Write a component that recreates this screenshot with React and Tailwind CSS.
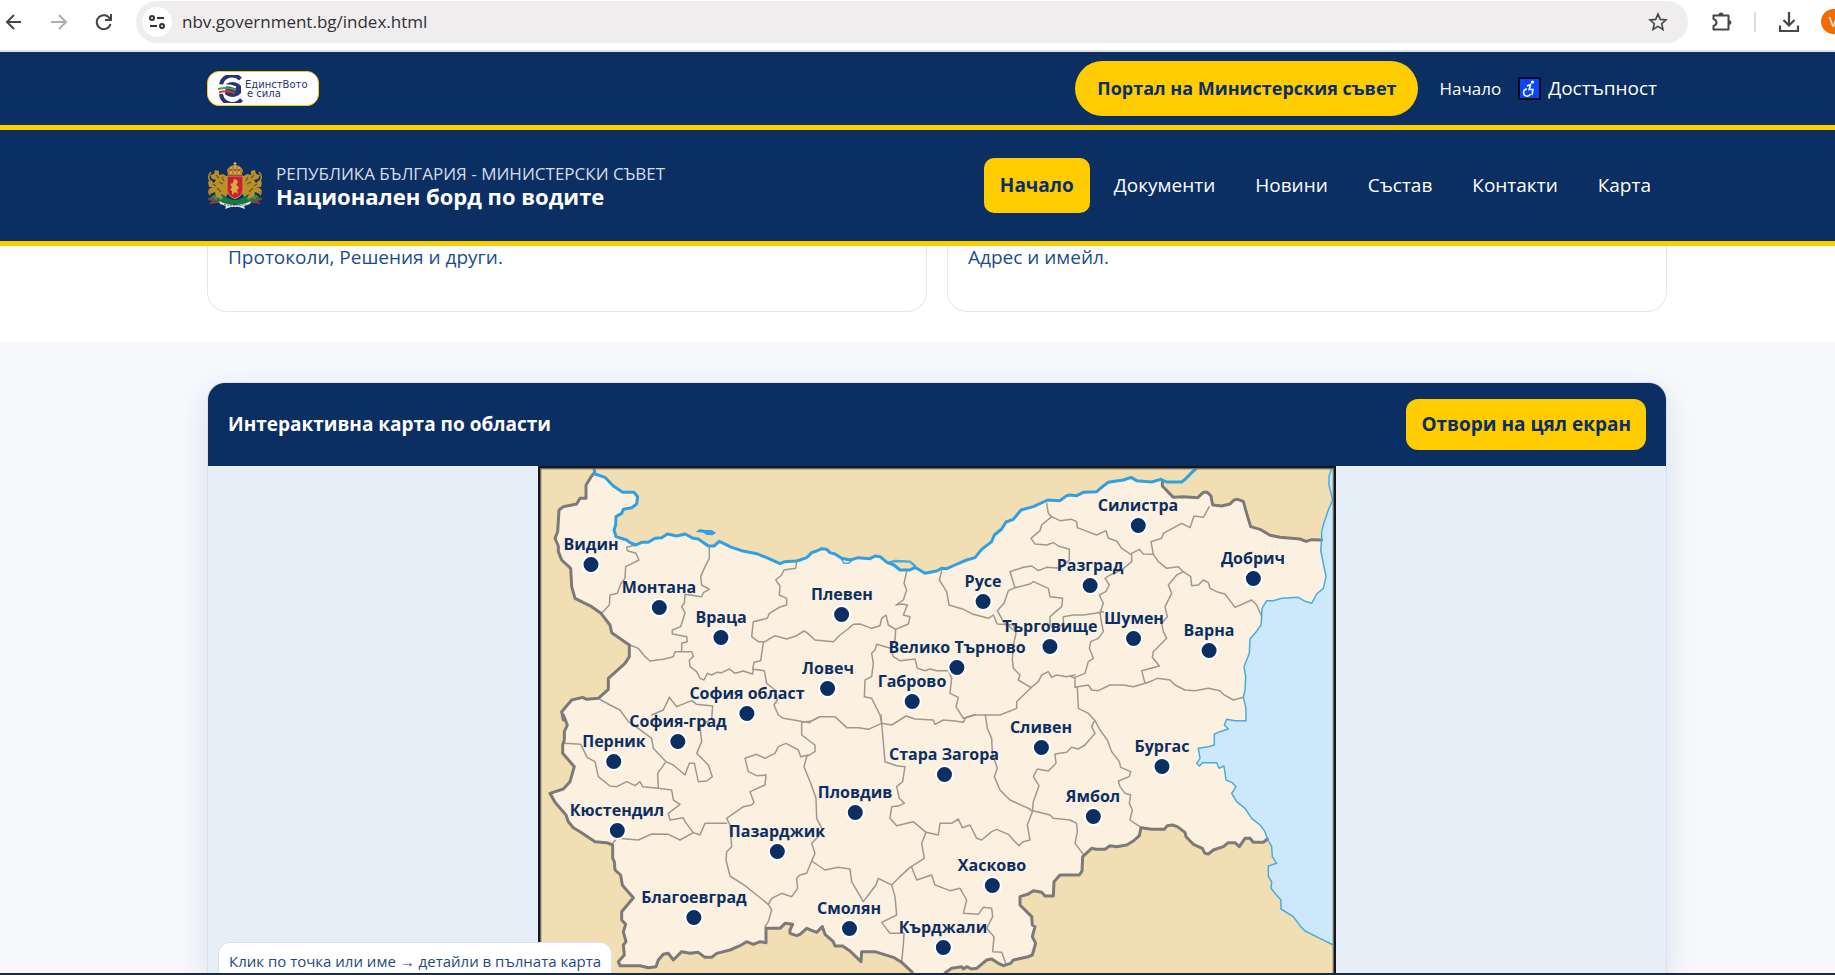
import React from "react";

const at = (dx, dy, list) =>
  list
    .split(" ")
    .map((p) => {
      const [x, y] = p.split(",").map(Number);
      return `${x + dx},${y + dy}`;
    })
    .join(" ");

const danube = [
  "192,25 195,42 225,52 250,78 278,97 312,97 323,110 320,132 305,143 280,148 275,160 258,170 257,195 252,210 258,230 290,240 300,248 318,255 335,247 355,247 375,235 395,233 412,222 440,228 465,222 490,235 505,237 535,258 552,258 568,244 605,262 635,272 680,281 710,293 750,311 765,305 798,303",
  at(810, 0, "0,300 20,293 35,278 50,273 65,266 80,268 90,278 105,282 125,295 150,300 175,293 210,296 225,288 240,290 262,308 282,315 300,330 330,330 345,322 375,340 410,333 425,325 440,326 465,315 500,300 525,293 545,268 575,245 583,225 605,207 618,186 640,178 663,150 700,140 743,120 780,122 800,107"),
  at(1620, 0, "0,105 20,107 40,97 80,95 100,78 115,67 160,60 183,52 200,62 245,66 272,58"),
].join(" ");

const danubeEast = at(1620, 0, "272,58 290,66 335,66 345,58 378,25");

const northEast = at(1620, 0, "277,66 277,78 310,112 340,110 383,113 400,97 412,97 423,108 428,135 455,138 480,132 492,120 503,118 520,124 530,160 542,200 570,208 600,226 630,232 690,237 708,244 725,239 755,240");

const coastNorth = at(1620, 0, "785,25 777,50 777,75 788,120 775,150 763,185 755,215 755,240");

const coast = [
  at(1620, 0, "755,240 752,270 760,310 768,350 760,385 740,402 725,430 705,424 685,412 635,415 610,422 590,422 576,445 575,470 573,495 555,520 540,537 538,580 522,620 527,650 525,690 520,712 527,740 528,765"),
  at(1620, 765, "528,17 495,17 470,13 463,30 475,42 450,50 433,57 433,90 415,95 385,100 390,130 380,145 388,153 398,143 440,143 447,160 462,153 468,195 487,203 498,215 485,235 500,260 525,280 545,310 570,330 585,350 592,372"),
].join(" ");

const coastSouth = at(1620, 765, "592,372 605,395 607,425 620,445 595,453 595,485 605,500 603,520 615,535 633,555 633,582 670,605 690,632 705,648 745,668 790,690");

const south = [
  at(1620, 765, "592,372 580,382 550,382 540,370 525,370 508,395 495,383 475,383 460,395 430,405 415,417 405,415 397,400 370,388 348,365 345,352 322,335 307,330 292,332 283,343 245,343 213,338 208,362 190,378 170,390 140,395 120,392 105,403 78,403 65,400 38,425 36,468 28,480 0,480"),
  at(810, 765, "780,480 762,500 760,543 735,543 725,532 700,527 685,537 660,545 660,570 695,605 697,630 705,635 697,665 707,685 697,720 685,725 640,735 632,745 610,752 595,745 575,732 560,735 530,760 515,762 500,755 490,762 485,755 455,760 440,770 420,790 345,790 335,770 305,742 280,727 225,710 185,710 183,740 150,708 128,693 105,693 100,680 75,658 67,635 50,652 20,640 0,658"),
  at(0, 765, "800,662 780,655 780,645 788,628 765,625 750,640 708,640 708,683 690,680 670,688 650,680 630,692 600,705 560,715 545,727 525,727 505,712 480,715 455,710 430,735 415,715 400,718 385,735 378,755 355,758 330,752 270,752 265,740 283,720 280,690 288,680 280,650 287,628 275,615 275,590 310,548 285,520 277,510 272,480 255,465 253,440 248,430 248,390 230,383 195,380 150,350 130,338 115,320 108,300 75,262 60,235 100,222 120,200 133,155 98,115 98,90 103,75 103,50 112,30 100,0"),
  "100,780 95,755 125,720 158,712 170,718 205,715 235,688 235,655 285,610 298,590 298,555 245,518 240,495 213,460 185,440 135,415 125,380 122,325 95,300 85,275 85,258 75,235 83,215 87,150 100,140 140,132 150,115 168,115 168,75 185,48 192,40",
].join(" ");

const regions = [
  "318,255 290,262 292,272 318,280 327,300 287,320 285,355 272,372 262,400 240,405 238,435 215,460",
  "538,262 538,295 525,320 512,350 515,375 538,388 520,398 515,410 465,403 463,430 455,440 465,458 452,500 427,510 427,522 470,530 472,545 455,550 455,573",
  "300,555 325,565 345,590 360,603 400,598 430,590 435,575 485,575 490,590 478,600 480,620 500,635 510,655 522,660 532,640 545,645 560,637 575,638 598,627 615,640 640,633 668,642 670,628 703,632 710,670 735,690 742,720 732,735 745,765 760,775 840,788",
  "668,628 672,607 692,602 700,548",
  "800,305 797,325 762,330 755,345 737,360 750,378 748,405 770,415 770,435 748,442 718,460 712,475 670,485 665,530 685,545 705,545 735,527 770,537 800,527 822,513 830,517 855,540 910,545 930,525 950,510 970,493 990,492 1025,505 1050,497 1055,475 1068,465 1075,495 1097,508 1135,492 1140,470 1120,465 1132,435 1115,432 1098,435 1120,420 1130,390 1122,370 1130,335",
  at(810, 0, "287,508 285,540 272,565 230,553 225,570 215,580 220,610 215,650 195,660 193,710 215,715 240,765 245,790"),
  at(810, 0, "272,565 280,590 300,602 345,597 352,625 375,632 390,627 410,632 445,632 455,655 450,700 475,712 468,740 490,775 520,765 555,765 600,765 650,745 650,725 693,683"),
  at(810, 0, "425,333 418,360 440,395 447,435 490,448 520,463 565,475 580,465 592,492 640,495 648,520 640,555 637,600 640,625 660,645 655,660 693,683 715,665 725,645 745,635 755,652 770,645 800,650 825,645"),
  at(810, 0, "640,510 610,485 592,452 612,430 625,392 645,383 690,372 700,365 745,385 750,410 788,415 785,440 750,470 750,490 765,515 790,490 790,470 820,465 850,465 885,460 910,455"),
  at(810, 0, "645,383 630,335 670,322 695,318 715,332 740,322 780,325 808,300 808,268 775,258 760,248 740,255 705,252 693,235 720,212 725,195 755,170 745,160 740,130"),
  at(1620, 0, "-55,170 -30,182 5,178 20,185 22,203 45,212 80,225 108,212 115,235 140,243 155,265 185,285 185,305 155,330 120,345 105,355 118,375 107,395 88,405 100,430 90,458"),
  at(1620, 0, "185,280 208,268 220,282 250,283 243,245 275,235 280,220 335,190 360,203 372,168 400,172 418,140"),
  at(1620, 0, "250,283 265,305 290,325 325,320 340,335 362,350 365,377 385,375 400,360 415,368 420,385 445,397 465,402 495,442 545,420 560,435 573,465"),
  at(1620, 0, "340,335 320,345 295,375 305,400 285,440 292,470 275,490 280,515 290,535 250,575 247,592 268,618 215,632 225,670 190,680 160,675 120,675 85,692 65,690 55,675 15,682 15,655 0,648"),
  at(1620, 0, "225,670 240,665 262,655 300,660 315,675 345,690 375,692 415,685 450,692 460,703 490,720 520,712"),
  at(1620, 0, "90,458 95,490 100,515 85,535 62,545 58,565 70,595 55,605 45,640 15,652"),
  at(1620, 0, "22,680 25,745 55,760 75,782 90,810 112,840 125,875 148,905 152,922 182,935 178,950 145,963 150,980 165,1000 182,1005 178,1030 187,1050 180,1080 213,1102"),
  at(1620, 765, "72,20 65,35 75,55 45,90 25,102 5,97 -10,112 -45,117 -42,145 -65,168 -98,162 -110,185 -93,212 -110,260 -113,290"),
  at(810, 765, "697,290 682,330 690,375 670,380 657,392 640,375 625,358 590,343 575,350 545,375 530,370 510,330 487,338 475,312 455,325 420,325 415,360 378,352"),
  at(810, 765, "690,285 750,300 760,310 810,315 830,325 832,350 825,385 850,418"),
  at(810, 765, "556,0 562,40 575,70 577,115 592,160 583,185 600,225 630,255 690,282"),
  at(810, 765, "243,0 248,60 255,140 290,152 315,155 308,200 290,215 298,250 313,265 298,272 275,275 270,310 290,332 340,320 378,352 365,385 373,430 330,457 300,485 275,510"),
  at(810, 765, "30,20 60,5 105,5 140,38 175,38 205,43 245,25 275,30 318,3 345,12 400,15 405,28 430,15 465,18 490,22 497,8 525,0"),
  at(810, 765, "60,5 35,18 5,22 5,60 45,90 45,110 20,125 12,155 32,205 48,250 50,310 68,345 50,370 35,385 45,415 35,438 75,465 115,457 150,462 155,500 190,560 205,540 228,510 235,490 275,510 285,545 290,600 245,622 270,655 312,655 310,690 305,742"),
  at(810, 765, "35,438 20,475 0,480 -10,490 -7,520 -25,545 -55,535 -85,550 -95,568 -85,585 -95,620 -105,635"),
  at(0, 765, "715,568 645,512 600,483 588,435 590,410 605,395 600,330 590,310 640,275 665,270 672,262 660,230 705,210 708,180 680,182 655,170 645,130 680,118 705,130 735,115 745,95 768,85 805,105 812,125 835,120"),
  at(0, 765, "590,325 525,325 510,360 490,353 465,320 460,308 420,315 415,295 450,268 430,255 425,225 385,220 338,215 330,200 315,212 290,200 260,215 240,213 205,185 195,140 172,128 152,88 105,85"),
  at(0, 765, "490,353 450,375 415,358 365,357 325,375 262,370 245,388"),
  at(0, 765, "385,220 383,175 408,140 370,100 365,70 325,40 295,20 270,-15 240,-30 210,-47"),
  at(0, 765, "408,140 430,150 465,180 478,145 493,145 505,200 530,198 547,185 535,150 500,115 515,80 510,35 545,10 548,-27 500,-32 485,-43 440,-25 418,-53 400,-15 365,0"),
  at(810, 765, "335,457 350,495 395,480 405,510 450,527 480,520 500,555 490,595 535,598 550,577 575,580 578,605 560,640 582,665 578,710 605,712 617,745"),
];

const cities = [
  ["Видин", 591, 564], ["Монтана", 659, 607], ["Враца", 721, 637],
  ["София област", 747, 713], ["Плевен", 842, 614], ["Русе", 983, 601],
  ["Велико Търново", 957, 667], ["Ловеч", 828, 688], ["Габрово", 912, 701],
  ["Търговище", 1050, 646], ["Силистра", 1138, 525], ["Разград", 1090, 585],
  ["Добрич", 1253, 578], ["Шумен", 1134, 638], ["Варна", 1209, 650],
  ["София-град", 678, 741], ["Перник", 614, 761], ["Кюстендил", 617, 830],
  ["Пазарджик", 777, 851], ["Благоевград", 694, 917], ["Стара Загора", 944, 774],
  ["Пловдив", 855, 812], ["Сливен", 1041, 747], ["Хасково", 992, 885],
  ["Смолян", 849, 928], ["Кърджали", 943, 947], ["Бургас", 1162, 766],
  ["Ямбол", 1093, 816],
];

function BulgariaMap() {
  return (
    <div className="relative h-[550px] w-[798px] shrink-0">
      <svg className="block" width="798" height="550" viewBox="24 18 2394 1650" aria-hidden="true">
        <rect x="24" y="18" width="2394" height="1650" fill="#f2deb3" />
        <polygon points={`${coastNorth} ${coast} ${coastSouth} 2418,1462 2418,18`} fill="#cde8fa" />
        <polygon points={`${danube} ${northEast} ${coast} ${south}`} fill="#fcf1e0" />
        <g fill="none" strokeLinejoin="round" strokeLinecap="round">
          <g stroke="#a0988f" strokeWidth="4.5">
            {regions.map((r) => <polyline key={r} points={r} />)}
          </g>
          <polyline points={south} stroke="#7c7a78" strokeWidth="9" />
          <polyline points={northEast} stroke="#7c7a78" strokeWidth="9" />
          <g stroke="#4aaae0" strokeWidth="4.5">
            <polyline points={coastNorth} />
            <polyline points={coast} />
            <polyline points={coastSouth} />
            <polyline points="1075,308 1095,303 1140,305 1155,318" strokeWidth="7" />
            <polyline points="935,298 942,310 955,310 970,298" />
          </g>
          <g stroke="#329fe0" strokeWidth="9">
            <polyline points={danube} />
            <polyline points={danubeEast} />
          </g>
        </g>
        <path d="M497 215L510 207L525 210L545 210L558 218L548 226L530 225L520 218Z" fill="#329fe0" />
        <rect x="28" y="22" width="2386" height="1660" fill="none" stroke="#6d6a60" strokeWidth="12" />
        <rect x="27" y="21" width="2388" height="1660" fill="none" stroke="#15171a" strokeWidth="6" />
      </svg>
      {cities.map(([name, x, y]) => (
        <button
          key={name}
          type="button"
          className="absolute flex -translate-x-1/2 -translate-y-full flex-col items-center gap-px whitespace-nowrap text-[16px] font-bold leading-5 text-[#0b2e63]"
          style={{ left: x - 538, top: y - 466 + 10 }}
        >
          <span>{name}</span>
          <span className="block size-[19px] rounded-full border-2 border-white bg-[#0b2e63]" />
        </button>
      ))}
    </div>
  );
}

function Lion() {
  return (
    <>
      <path d="M21 15L16 12L12 13L12 9L8 8L7 12L3 13L5 17L9 18L7 21L4 18L1 20L2 25L6 25L3 27L3 32L8 30L9 35L16 37L14 32L19 35L21 31Z" fill="#b98f2a" />
      <path d="M3 19Q0 14 4 10M5 26Q0 28 3 33" fill="none" stroke="#b98f2a" strokeWidth="1.5" />
      <path d="M9 13l3 3M12 20l4 2M10 26l4 4M6 22l3 2M15 15l2 4" stroke="#6b551f" strokeWidth="1.1" />
    </>
  );
}

function Emblem() {
  return (
    <svg width="56" height="48" viewBox="0 0 56 48" aria-hidden="true">
      <path d="M1 38Q7 29 16 34L26 38H30L40 34Q49 29 55 38L46 40Q38 44 28 42Q18 44 10 40Z" fill="#137a45" />
      <path d="M1 37l8 0-5 4 8-1M55 37l-8 0 5 4-8-1" stroke="#a83a3a" strokeWidth="1.3" fill="none" />
      <path d="M6 34l4 3M12 33l2 5M50 34l-4 3M44 33l-2 5" stroke="#3fa56b" strokeWidth="1.2" />
      <g><Lion /></g>
      <g transform="translate(56 0) scale(-1 1)"><Lion /></g>
      <path d="M20 14H36V29Q35 34 28 37Q21 34 20 29Z" fill="#c81f35" stroke="#c9a03a" strokeWidth="1" />
      <path d="M27 17l3 1 1 3-2 1 3 4-2 2 1 4-3-2-3 3v-4l-2-1 2-3-2-3 3-1z" fill="#d9ab3b" />
      <path d="M21 13L20 8Q23 3 28 3Q33 3 36 8L35 13Z" fill="#b7862a" />
      <path d="M24 5v7M28 0v12M32 5v7M26.500 1.500h3" stroke="#e4c066" strokeWidth="1.200" />
      <path d="M23 8h2M31 8h2M27 8h2" stroke="#a3263a" strokeWidth="1.500" />
      <path d="M12 39Q28 47 44 39L43 42L37 44L38 47L32 45H24L18 47L19 44L13 42Z" fill="#e4e2dc" />
      <path d="M17 42Q28 46 39 42" fill="none" stroke="#777" strokeWidth="1" strokeDasharray="2 1" />
    </svg>
  );
}

function UnityLogo() {
  return (
    <a href="#unity" className="flex h-[35px] w-[112px] items-center gap-[2px] rounded-xl border border-[#ffcc00] bg-white pl-[10px] text-[#2b3275]">
      <svg width="25" height="28" viewBox="0 0 25 28" className="shrink-0" aria-hidden="true">
        <path d="M22.500 4A11.500 11.500 0 0 0 3 9.500M3 19A11.500 11.500 0 0 0 23.500 24.500" fill="none" stroke="#2b3275" strokeWidth="4" />
        <path d="M8 9Q11 7 15 7Q20 7.500 23 11V18Q20 21.500 15 22Q10 22 7 19Z" fill="#2b3275" />
        <path d="M0 11.500Q9 8.500 18 12.500" fill="none" stroke="#fff" strokeWidth="2" />
        <path d="M0 14Q9 11.500 18 15" fill="none" stroke="#4a9b4a" strokeWidth="2" />
        <path d="M1 17.500Q9 15 17 18" fill="none" stroke="#d23b3b" strokeWidth="2" />
      </svg>
      <span className="flex flex-col whitespace-nowrap font-['DejaVu_Sans',sans-serif] text-[10px] leading-[9px]">
        <span>ЕдинстВото</span>
        <span className="pl-[2px]">е сила</span>
      </span>
    </a>
  );
}

function BrowserBar() {
  return (
    <div className="flex h-[52px] shrink-0 items-start border-b-2 border-[#dfdfdf] bg-white">
      <div className="flex h-[43px] flex-1 items-center">
        <button type="button" aria-label="Назад" className="ml-[5px]">
          <svg width="18" height="18" viewBox="0 0 18 18" fill="none" stroke="#474747" strokeWidth="2"><path d="M16 9H2.500M9 2L2 9l7 7" /></svg>
        </button>
        <button type="button" aria-label="Напред" className="ml-[27px]">
          <svg width="18" height="18" viewBox="0 0 18 18" fill="none" stroke="#b0b0b0" strokeWidth="2"><path d="M1 9h14.500M9 2l7 7-7 7" /></svg>
        </button>
        <button type="button" aria-label="Презареждане" className="ml-[27px]">
          <svg width="18" height="18" viewBox="0 0 18 18" fill="none" stroke="#474747" strokeWidth="2"><path d="M15.500 11A7 7 0 1 1 15 6M16 1v6h-6" /></svg>
        </button>
        <div className="ml-[23px] flex h-[42px] flex-1 items-center rounded-full bg-[#efedee] pl-[6px] pr-[20px]">
          <button type="button" aria-label="Информация за сайта" className="flex size-[30px] items-center justify-center rounded-full bg-white">
            <svg width="16" height="14" viewBox="0 0 16 14" fill="none" stroke="#333" strokeWidth="2"><circle cx="3" cy="3" r="2" /><path d="M8 3h7M1 11h7" /><circle cx="13" cy="11" r="2" /></svg>
          </button>
          <input aria-label="Адрес" className="ml-[10px] min-w-0 flex-1 bg-transparent text-[17px] text-[#303134] outline-none" defaultValue="nbv.government.bg/index.html" />
          <button type="button" aria-label="Отметка">
            <svg width="20" height="20" viewBox="0 0 20 20" fill="none" stroke="#474747" strokeWidth="1.600"><path d="M10 2l2.300 5.400 5.700.5-4.300 3.800 1.300 5.800-5-3.100-5 3.100 1.300-5.800L2 7.900l5.700-.5z" /></svg>
          </button>
        </div>
        <button type="button" aria-label="Разширения" className="ml-[23px]">
          <svg width="22" height="22" viewBox="0 0 22 22"><path d="M2.500 4.500h15v14h-15V15q3-1 3-3.500t-3-3.500z" fill="none" stroke="#474747" strokeWidth="2" strokeLinejoin="round" /><path d="M7.500 4a2.500 2.500 0 0 1 5 0zM18 9a2.500 2.500 0 0 1 0 5z" fill="#474747" /></svg>
        </button>
        <span className="ml-[21px] h-[20px] w-[2px] bg-[#dedede]" />
        <button type="button" aria-label="Изтегляния" className="ml-[22px]">
          <svg width="22" height="22" viewBox="0 0 22 22" fill="none" stroke="#474747" strokeWidth="2.200"><path d="M11 1v13M5.500 9l5.500 5.500L16.500 9M2 14.500V20h18v-5.500" /></svg>
        </button>
        <span className="ml-[21px] flex h-[25px] w-[14px] shrink-0 items-center overflow-hidden rounded-l-full bg-[#f26b00] pl-[8px] text-[14px] text-white">V</span>
      </div>
    </div>
  );
}

const container = "mx-auto w-full max-w-[1460px]";
const nav = ["Документи", "Новини", "Състав", "Контакти", "Карта"];

export default function App() {
  return (
    <div className="flex h-screen flex-col overflow-hidden bg-white font-['Open_Sans','Noto_Sans',sans-serif] text-[#0b2e63]">
      <BrowserBar />
      <div className="-mr-[39px] flex min-h-0 flex-1 flex-col">
        <div className="h-[78px] shrink-0 border-b-[5px] border-[#ffcc00] bg-[#0b2e63]">
          <div className={`${container} flex h-full items-center justify-between`}>
            <UnityLogo />
            <div className="flex items-center pr-[10px] text-white">
              <a href="#portal" className="flex h-[55px] items-center rounded-full bg-[#ffcc00] px-[22px] text-[18px] font-bold text-[#0b2e63]">Портал на Министерския съвет</a>
              <a href="#home" className="ml-[21px] text-[17px]">Начало</a>
              <a href="#access" className="ml-[17px] flex items-center gap-[7px] text-[19px]">
                <svg width="23" height="23" viewBox="0 0 23 23" aria-hidden="true">
                  <rect x="1" y="1" width="21" height="21" fill="#0a46f5" stroke="#050b18" strokeWidth="2" />
                  <circle cx="14.500" cy="5" r="1.600" fill="#fff" />
                  <path d="M9 9l3.500-1.500L11 12.500h4L14 18M12.500 8l-1 4" fill="none" stroke="#fff" strokeWidth="1.500" />
                  <path d="M9 12a3.600 3.600 0 1 0 3.500 5" fill="none" stroke="#fff" strokeWidth="1.500" />
                </svg>
                Достъпност
              </a>
            </div>
          </div>
        </div>

        <header className="h-[116px] shrink-0 border-b-[5px] border-[#ffcc00] bg-[#0b2e63] text-white">
          <div className={`${container} flex h-full items-center justify-between`}>
            <a href="#top" className="flex items-center gap-[13px]">
              <Emblem />
              <span className="flex flex-col pb-[2px]">
                <span className="text-[17px] leading-[22px] text-[#d5dce8]">РЕПУБЛИКА БЪЛГАРИЯ - МИНИСТЕРСКИ СЪВЕТ</span>
                <span className="text-[22px] font-bold leading-[22px]">Национален борд по водите</span>
              </span>
            </a>
            <nav className="flex gap-2 text-[19px]">
              <a href="#home" className="flex h-[55px] items-center rounded-[10px] bg-[#ffcc00] px-4 font-bold text-[#0b2e63]">Начало</a>
              {nav.map((n) => <a key={n} href="#section" className="flex h-[55px] items-center px-4">{n}</a>)}
            </nav>
          </div>
        </header>

        <section className="shrink-0 bg-white pb-[30px]">
          <div className={`${container} grid grid-cols-2 gap-5 text-[19px] leading-[22px] text-[#1b4b94]`}>
            <a href="#documents" className="block h-[66px] rounded-b-[20px] border border-t-0 border-[#e2e7f1] px-5">Протоколи, Решения и други.</a>
            <a href="#contacts" className="block h-[66px] rounded-b-[20px] border border-t-0 border-[#e2e7f1] px-5">Адрес и имейл.</a>
          </div>
        </section>

        <section className="flex min-h-0 flex-1 flex-col bg-[#f6f8fc] pt-[40px]">
          <div className={`${container} flex min-h-0 flex-1 flex-col overflow-hidden rounded-t-[18px] border border-b-0 border-[#d8e2ef] bg-[#e6eef8] shadow-[0_10px_30px_rgba(11,46,99,0.12)]`}>
            <div className="flex h-[83px] shrink-0 items-center justify-between bg-[#0b2e63] px-5">
              <h2 className="text-[19px] font-bold text-white">Интерактивна карта по области</h2>
              <button type="button" className="h-[51px] rounded-xl bg-[#ffcc00] px-[15px] text-[19px] font-bold">Отвори на цял екран</button>
            </div>
            <div className="relative flex min-h-0 flex-1 justify-center overflow-hidden">
              <BulgariaMap />
              <p className="absolute bottom-0 left-[10px] flex h-[31px] items-center whitespace-nowrap rounded-t-[12px] border border-b-0 border-[#d8e2ef] bg-white px-[10px] pt-[6px] text-[15px] text-[#234a7c]">Клик по точка или име → детайли в пълната карта</p>
            </div>
          </div>
        </section>
      </div>
      <div className="h-[2px] shrink-0 bg-[#1b2b3c]" />
    </div>
  );
}
